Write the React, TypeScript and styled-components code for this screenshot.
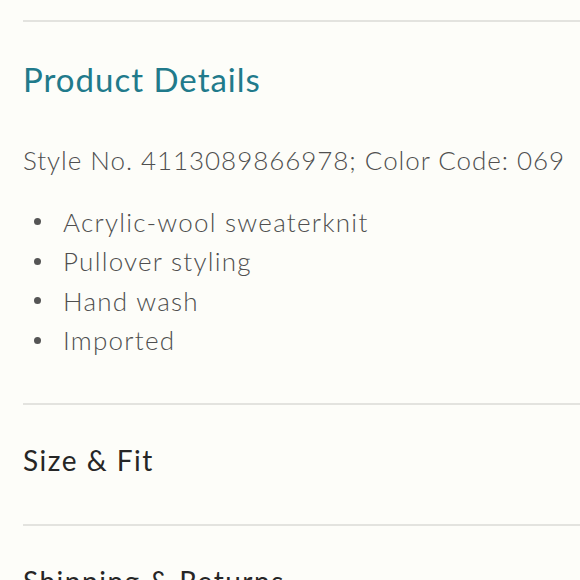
import React from "react";
import styled, { createGlobalStyle } from "styled-components";

const Global = createGlobalStyle`
  html, body { margin: 0; padding: 0; background: #fdfdf9; }
  body { font-family: "Lato", "Noto Sans", sans-serif; overflow: hidden; }
`;

const Page = styled.div`
  padding: 20px 0 0 23px;
  height: 560px;
  overflow: hidden;
`;

const Section = styled.section<{ $pad: string }>`
  border-top: 2px solid #e3e3df;
  padding: ${(p) => p.$pad};
`;

const Heading = styled.h2<{ $teal?: boolean }>`
  margin: 0;
  font-weight: 400;
  font-size: ${(p) => (p.$teal ? "33px" : "28px")};
  line-height: 40px;
  letter-spacing: ${(p) => (p.$teal ? "1px" : "1.5px")};
  color: ${(p) => (p.$teal ? "#217a8b" : "#262626")};
`;

const Meta = styled.p`
  margin: 45px 0 0;
  font-size: 26px;
  font-weight: 300;
  line-height: 32px;
  letter-spacing: 0.95px;
  color: #4f4f4f;
`;

const List = styled.ul`
  margin: 26px 0 0;
  padding: 0;
  list-style: none;
  display: flex;
  flex-direction: column;
`;

const Item = styled.li`
  display: flex;
  align-items: center;
  height: 39.5px;
  font-size: 26px;
  font-weight: 300;
  letter-spacing: 1.25px;
  color: #4f4f4f;
  &::before {
    content: "";
    width: 7px;
    height: 7px;
    border-radius: 50%;
    background: #555;
    margin: 0 22px 0 11px;
    flex: none;
  }
`;

const items = ["Acrylic-wool sweaterknit", "Pullover styling", "Hand wash", "Imported"];

export default function App() {
  return (
    <>
      <Global />
      <Page>
        <Section $pad="37px 0 43px">
          <Heading $teal>Product Details</Heading>
          <Meta>Style No. 4113089866978; Color Code: 069</Meta>
          <List>
            {items.map((t) => (
              <Item key={t}>{t}</Item>
            ))}
          </List>
        </Section>
        <Section $pad="35px 0 44px">
          <Heading>Size &amp; Fit</Heading>
        </Section>
        <Section $pad="35px 0 0">
          <Heading>Shipping &amp; Returns</Heading>
        </Section>
      </Page>
    </>
  );
}
